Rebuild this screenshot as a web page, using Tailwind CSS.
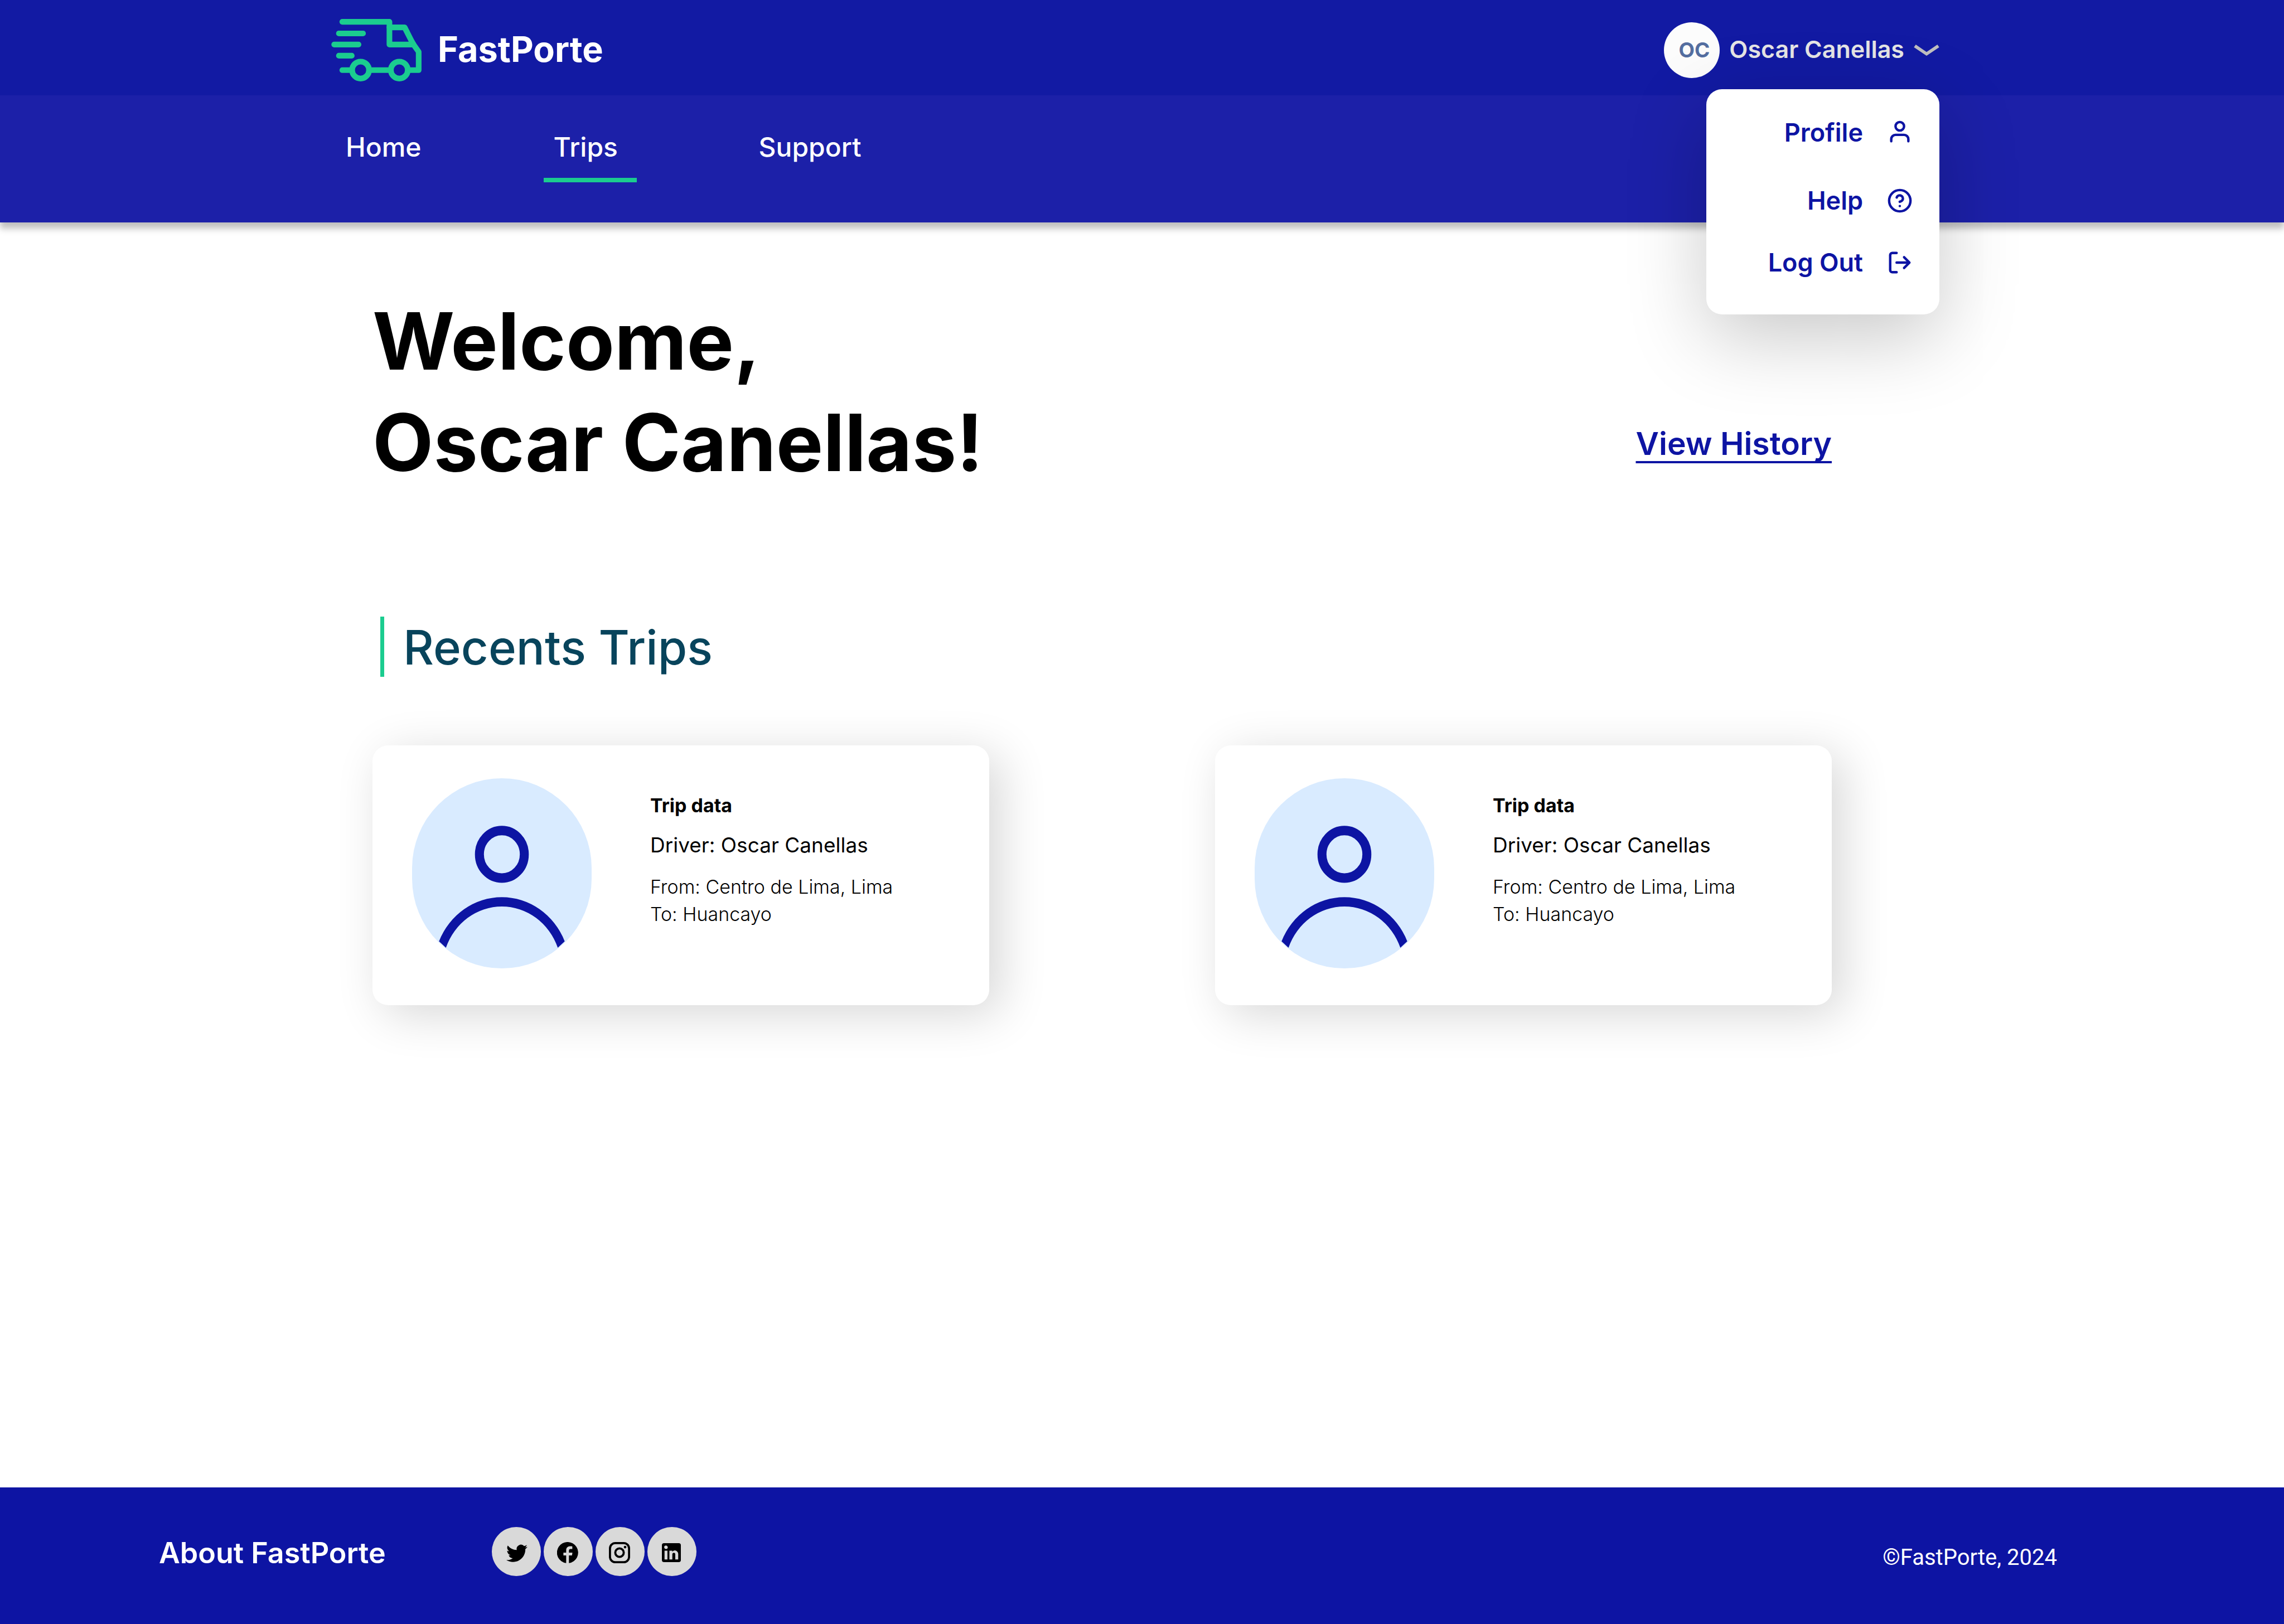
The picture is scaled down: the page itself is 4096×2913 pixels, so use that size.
<!DOCTYPE html>
<html lang="en">
<head>
<meta charset="utf-8">
<meta name="viewport" content="width=device-width, initial-scale=1">
<title>FastPorte</title>
<script src="https://cdn.jsdelivr.net/npm/@tailwindcss/browser@4"></script>
</head>
<body class="flex min-h-screen flex-col bg-white font-[Inter,sans-serif] text-black">

<header class="relative z-10 shadow-[0_11px_11px_rgba(0,0,0,0.25)]">
  <div class="flex h-[171px] items-center justify-between bg-[#121aa3] pt-2 pr-[618px] pl-[594px]">
    <a href="#" class="flex items-center gap-[29px] text-[63px] leading-[76px] font-bold text-white">
      <svg class="h-[112px] w-[162px]" viewBox="836 47 228 158" fill="none" stroke="#1bcc8f" stroke-width="14.3" stroke-linecap="round" stroke-linejoin="round" aria-hidden="true">
        <path d="M863.7 54.2H983V111.7H1044"/>
        <path d="M983 68.3H1021.5L1038 101L1044.8 113L1057 130V176.5H1036"/>
        <path d="M855.1 83.6H916.2M843.2 111.7H904.8M855.1 140H887.7M863.7 176.5H882M938 176.5H980"/>
        <circle cx="910" cy="176.3" r="21.4"/>
        <circle cx="1008" cy="176.3" r="21.4"/>
      </svg>
      <span class="pb-1">FastPorte</span>
    </a>
    <div class="relative">
      <button type="button" aria-haspopup="menu" aria-expanded="true" class="flex items-center gap-[17px] text-[43px] leading-[52px] font-semibold text-[#e5e5e5]">
        <span class="flex size-[100px] items-center justify-center rounded-full bg-[#fcfcfc] pl-2 text-[37px] font-bold text-[#546ea0]">OC</span>
        <span class="pb-1">Oscar Canellas</span>
        <svg class="h-[20px] w-[46px]" viewBox="4825.8 108.7 64.2 28.3" fill="#bfbfbf" aria-hidden="true"><path d="M4830.6 108.7L4857.9 127.3L4885.4 108.7L4890 115.3L4857.9 137L4825.8 115.3Z"/></svg>
      </button>
      <div role="menu" class="absolute top-full right-0 mt-5 flex w-[418px] flex-col rounded-[28px] bg-white pt-[50px] pr-[48px] pb-[65px] text-[45px] leading-[56px] font-semibold text-[#0d14a3] shadow-[0_40px_142px_rgba(0,0,0,0.22)]">
        <a href="#" role="menuitem" class="mb-[66px] flex items-center justify-end gap-[43px]">Profile
          <svg class="size-[46px]" viewBox="0 0 24 24" fill="none" stroke="currentColor" stroke-width="2.3" stroke-linecap="round" stroke-linejoin="round" aria-hidden="true"><path d="M20 20v-2a4 4 0 0 0-4-4H8a4 4 0 0 0-4 4v2"/><circle cx="12" cy="6" r="4"/></svg>
        </a>
        <a href="#" role="menuitem" class="mb-[55px] flex items-center justify-end gap-[43px]">Help
          <svg class="size-[46px]" viewBox="0 0 24 24" fill="none" stroke="currentColor" stroke-width="2.3" stroke-linecap="round" stroke-linejoin="round" aria-hidden="true"><circle cx="12" cy="12" r="10"/><path d="M9.09 9a3 3 0 0 1 5.83 1c0 2-3 3-3 3M12 17h.01"/></svg>
        </a>
        <a href="#" role="menuitem" class="flex items-center justify-end gap-[43px]">Log Out
          <svg class="size-[46px]" viewBox="0 0 24 24" fill="none" stroke="currentColor" stroke-width="2.3" stroke-linecap="round" stroke-linejoin="round" aria-hidden="true"><path d="M9 21H5a2 2 0 0 1-2-2V5a2 2 0 0 1 2-2h4M16 17l5-5-5-5M21 12H9"/></svg>
        </a>
      </div>
    </div>
  </div>
  <nav class="flex h-[228px] items-start gap-[201px] bg-[#1c20a8] pt-[61px] pl-[602px] text-5xl leading-[64px] font-medium text-white">
    <a href="#" class="px-[18px]">Home</a>
    <a href="#" aria-current="page" class="min-w-[167px] border-b-8 border-[#1bcc8f] px-[18px] pb-[23px]">Trips</a>
    <a href="#" class="px-[18px]">Support</a>
  </nav>
</header>

<main class="flex-1 pt-[121px] pr-[811px] pl-[668px]">
  <div class="flex items-end justify-between">
    <h1 class="text-[142px] leading-[182px] font-bold">Welcome,<br>Oscar Canellas!</h1>
    <a href="#" class="mb-[53px] text-[57px] leading-[70px] font-semibold text-[#0d14a3] underline decoration-4 underline-offset-[11px] [text-decoration-skip-ink:none]">View History</a>
  </div>

  <h2 class="mt-[222px] ml-[14px] border-l-[7px] border-[#1bcc8f] pt-1 pl-[34px] text-[85px] leading-[104px] font-medium text-[#08445c]">Recents Trips</h2>

  <div class="mt-[123px] grid grid-cols-2 gap-[405px]">
    <article class="flex gap-[105px] rounded-[28px] bg-white pt-[59px] pb-[66px] pl-[71px] shadow-[20px_16px_84px_rgba(0,0,0,0.16)]">
      <svg class="h-[341px] w-[322px] rounded-full bg-[#d9ebff]" viewBox="0 0 20 20" preserveAspectRatio="none" aria-hidden="true">
        <circle cx="10" cy="8" r="2.5" fill="none" stroke="#0d14a3"/>
        <path fill="#0d14a3" d="M3 17.15A7.6 7.6 0 0 1 17 17.15L16.23 17.83A6.64 6.64 0 0 0 3.77 17.83Z"/>
      </svg>
      <div class="pt-6 text-[34px] leading-[49px] font-light">
        <h3 class="font-bold">Trip data</h3>
        <p class="mt-[22px] text-[37px] leading-[49px] font-normal">Driver: Oscar Canellas</p>
        <p class="mt-[26px]">From: Centro de Lima, Lima</p>
        <p>To: Huancayo</p>
      </div>
    </article>
    <article class="flex gap-[105px] rounded-[28px] bg-white pt-[59px] pb-[66px] pl-[71px] shadow-[20px_16px_84px_rgba(0,0,0,0.16)]">
      <svg class="h-[341px] w-[322px] rounded-full bg-[#d9ebff]" viewBox="0 0 20 20" preserveAspectRatio="none" aria-hidden="true">
        <circle cx="10" cy="8" r="2.5" fill="none" stroke="#0d14a3"/>
        <path fill="#0d14a3" d="M3 17.15A7.6 7.6 0 0 1 17 17.15L16.23 17.83A6.64 6.64 0 0 0 3.77 17.83Z"/>
      </svg>
      <div class="pt-6 text-[34px] leading-[49px] font-light">
        <h3 class="font-bold">Trip data</h3>
        <p class="mt-[22px] text-[37px] leading-[49px] font-normal">Driver: Oscar Canellas</p>
        <p class="mt-[26px]">From: Centro de Lima, Lima</p>
        <p>To: Huancayo</p>
      </div>
    </article>
  </div>
</main>

<footer class="flex items-center bg-[#0d14a3] pt-[71px] pr-[407px] pb-[86px] pl-[285px] text-white">
  <a href="#" class="mt-[6px] text-[52px] leading-[62px] font-semibold">About FastPorte</a>
  <div class="ml-[190px] flex gap-[5px] text-black">
    <a href="#" aria-label="Twitter" class="flex size-[88px] items-center justify-center rounded-full bg-[#d9d9d9] pt-[3px] pl-[3px]">
      <svg class="size-[38px]" viewBox="0 0 16 16" fill="currentColor"><path d="M5.026 15c6.038 0 9.341-5.003 9.341-9.334q.002-.211-.006-.422A6.7 6.7 0 0 0 16 3.542a6.7 6.7 0 0 1-1.889.518 3.3 3.3 0 0 0 1.447-1.817 6.5 6.5 0 0 1-2.087.793A3.286 3.286 0 0 0 7.875 6.03a9.32 9.32 0 0 1-6.767-3.429 3.29 3.29 0 0 0 1.018 4.382A3.3 3.3 0 0 1 .64 6.575v.045a3.29 3.29 0 0 0 2.632 3.218 3.2 3.2 0 0 1-.865.115 3 3 0 0 1-.614-.057 3.28 3.28 0 0 0 3.067 2.277A6.6 6.6 0 0 1 .78 13.58a6 6 0 0 1-.78-.045A9.34 9.34 0 0 0 5.026 15"/></svg>
    </a>
    <a href="#" aria-label="Facebook" class="flex size-[88px] items-center justify-center rounded-full bg-[#d9d9d9] pt-[3px] pr-[2px]">
      <svg class="size-[38px]" viewBox="0 0 20 20" fill="currentColor"><path d="M8.6 19.9A10 10 0 1 1 11.2 19.9V12.6H14.1L14.5 10H11.2V8.4C11.2 7 11.7 6.6 12.8 6.6H14.4V4.1C14.4 4.1 13.3 4 12.4 4C10 4 8.6 5.4 8.6 7.8V10H6V12.6H8.6Z"/></svg>
    </a>
    <a href="#" aria-label="Instagram" class="flex size-[88px] items-center justify-center rounded-full bg-[#d9d9d9] pt-[3px] pr-[2px]">
      <svg class="size-[38px]" viewBox="0 0 20 20" fill="none" stroke="currentColor" stroke-width="2"><rect x="1" y="1" width="18" height="18" rx="5"/><circle cx="10" cy="10" r="4"/><circle cx="15.25" cy="4.75" r="1.25" fill="currentColor" stroke="none"/></svg>
    </a>
    <a href="#" aria-label="LinkedIn" class="flex size-[88px] items-center justify-center rounded-full bg-[#d9d9d9] pt-[3px] pr-[2px]">
      <svg class="size-[34px]" viewBox="3 3 18 18" fill="currentColor"><path d="M19 3a2 2 0 0 1 2 2v14a2 2 0 0 1-2 2H5a2 2 0 0 1-2-2V5a2 2 0 0 1 2-2h14m-.5 15.5v-5.3a3.26 3.26 0 0 0-3.26-3.26c-.85 0-1.84.52-2.32 1.3v-1.11h-2.79v8.37h2.79v-4.93c0-.77.62-1.4 1.39-1.4a1.4 1.4 0 0 1 1.4 1.4v4.93h2.79M6.88 8.56a1.68 1.68 0 0 0 1.68-1.68c0-.93-.75-1.69-1.68-1.69a1.69 1.69 0 0 0-1.69 1.69c0 .93.76 1.68 1.69 1.68m1.39 9.94v-8.37H5.5v8.37h2.77z"/></svg>
    </a>
  </div>
  <p class="mt-[22px] ml-auto font-[Roboto,sans-serif] text-[40px] leading-[48px]">©FastPorte, 2024</p>
</footer>

</body>
</html>
